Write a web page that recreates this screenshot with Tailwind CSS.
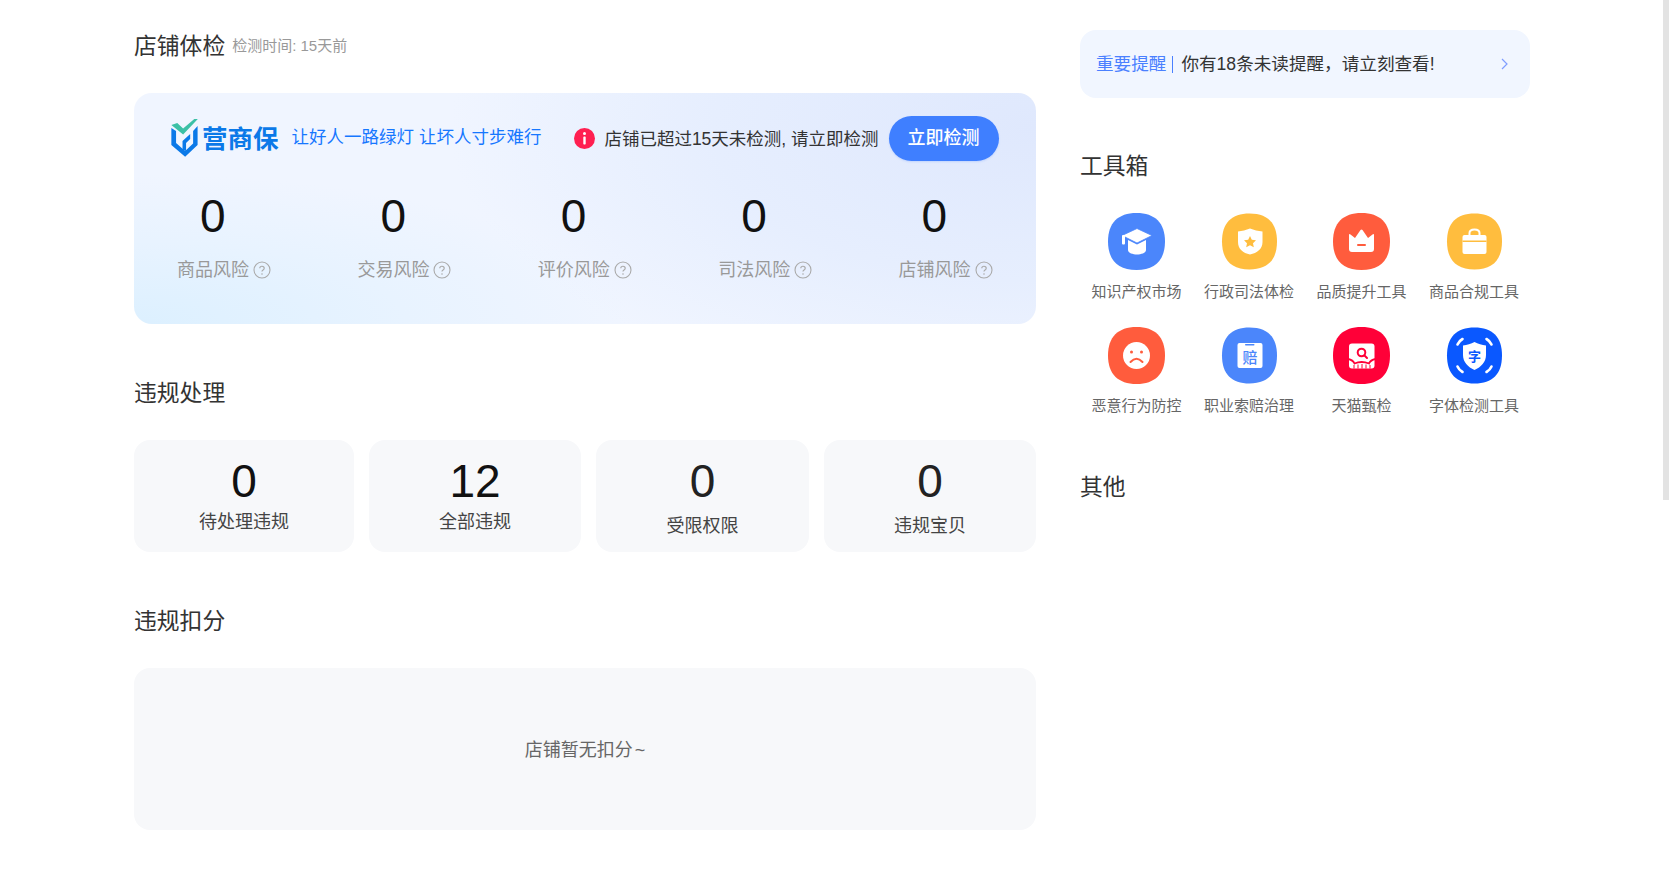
<!DOCTYPE html>
<html lang="zh-CN">
  <head>
    <meta charset="UTF-8" />
    <title>店铺体检</title>
    <script src="https://cdn.jsdelivr.net/npm/@tailwindcss/browser@4"></script>
  </head>
  <body class="relative h-[889px] overflow-hidden bg-white font-['Liberation_Sans','Noto_Sans_CJK_SC',sans-serif] text-[#333]">
    <!-- scrollbar -->
    <div class="absolute right-0 top-0 h-[500px] w-[6px] bg-[#e3e3e3]"></div>

    <div class="flex">
      <!-- left column -->
      <div class="ml-[134px] w-[902px]">
        <div class="flex h-[93px] items-start pt-[30px]">
          <h2 class="text-[22.800px] leading-[32px] text-[#333]">店铺体检</h2>
          <span class="ml-[7px] mt-[6px] text-[15px] leading-[20px] text-[#999]">检测时间: 15天前</span>
        </div>

        <!-- risk card -->
        <div class="h-[231px] rounded-[18px] bg-[radial-gradient(ellipse_55%_65%_at_0%_100%,#dcf0ff_0%,#e8f3ff_55%,transparent_100%),radial-gradient(ellipse_65%_120%_at_100%_15%,#dfe8fd_0%,#e6eefe_55%,transparent_100%),linear-gradient(#f0f5ff,#f0f5ff)]">
          <div class="flex h-[84px] items-center pl-[35px] pt-[7px]">
            <svg width="30" height="40" viewBox="0 0 25.500 40" preserveAspectRatio="none" class="mt-[-2px]">
              <path d="M2 10 L6 13 V25 L13.700 33 L20.500 25.500 V13 L24.300 8 V27 L13.700 38.700 L2 27 Z" fill="#0b79e8" />
              <path d="M11.500 32 V23 L18 16 V21 L14.500 25 V33 Z" fill="#0b79e8" />
              <path d="M2 7 L7 5 L12 10.500 L21.500 1 L24.500 1 L12 16.500 Z" fill="#3cc0a6" />
            </svg>
            <span class="ml-[3px] text-[25.500px] font-bold leading-[32px] text-[#0b79e8]">营商保</span>
            <span class="ml-[13px] mt-[-4px] text-[17.500px] leading-[24px] text-[#1677ff]">让好人一路绿灯 让坏人寸步难行</span>
            <svg width="21" height="21" viewBox="0 0 21 21" class="ml-[33px]">
              <circle cx="10.5" cy="10.5" r="10.5" fill="#ff1f51" />
              <circle cx="10.5" cy="5.6" r="1.5" fill="#fff" />
              <rect x="9.3" y="8.6" width="2.4" height="8" rx="0.8" fill="#fff" />
            </svg>
            <span class="ml-[9px] mt-[1px] text-[17.500px] leading-[24px] text-[#333]">店铺已超过15天未检测, 请立即检测</span>
            <button class="ml-[10px] flex h-[45px] w-[110px] items-center justify-center rounded-full bg-[#3f7fff] text-[18px] font-medium text-white shadow-[0_1px_2px_rgba(63,127,255,0.2)]">立即检测</button>
          </div>

          <div class="grid grid-cols-5 pt-[8px]">
            <div class="w-[181px]">
              <div class="pl-[66px] text-[46px] leading-[62px] text-[#111]">0</div>
              <div class="mt-[10px] flex items-center pl-[43px] text-[18px] leading-[26px] text-[#999]">商品风险
                <svg width="18" height="18" viewBox="0 0 18 18" class="ml-[4px]"><circle cx="9" cy="9" r="8" fill="none" stroke="#aaa" stroke-width="1.1" /><path d="M6.800 7.300 C6.800 4.600 11.200 4.600 11.200 7.200 C11.200 9 9 9 9 10.600" fill="none" stroke="#aaa" stroke-width="1.200" /><circle cx="9" cy="13" r="0.800" fill="#aaa" /></svg>
              </div>
            </div>
            <div class="w-[181px]">
              <div class="pl-[66px] text-[46px] leading-[62px] text-[#111]">0</div>
              <div class="mt-[10px] flex items-center pl-[43px] text-[18px] leading-[26px] text-[#999]">交易风险
                <svg width="18" height="18" viewBox="0 0 18 18" class="ml-[4px]"><circle cx="9" cy="9" r="8" fill="none" stroke="#aaa" stroke-width="1.1" /><path d="M6.800 7.300 C6.800 4.600 11.200 4.600 11.200 7.200 C11.200 9 9 9 9 10.600" fill="none" stroke="#aaa" stroke-width="1.200" /><circle cx="9" cy="13" r="0.800" fill="#aaa" /></svg>
              </div>
            </div>
            <div class="w-[181px]">
              <div class="pl-[66px] text-[46px] leading-[62px] text-[#111]">0</div>
              <div class="mt-[10px] flex items-center pl-[43px] text-[18px] leading-[26px] text-[#999]">评价风险
                <svg width="18" height="18" viewBox="0 0 18 18" class="ml-[4px]"><circle cx="9" cy="9" r="8" fill="none" stroke="#aaa" stroke-width="1.1" /><path d="M6.800 7.300 C6.800 4.600 11.200 4.600 11.200 7.200 C11.200 9 9 9 9 10.600" fill="none" stroke="#aaa" stroke-width="1.200" /><circle cx="9" cy="13" r="0.800" fill="#aaa" /></svg>
              </div>
            </div>
            <div class="w-[181px]">
              <div class="pl-[66px] text-[46px] leading-[62px] text-[#111]">0</div>
              <div class="mt-[10px] flex items-center pl-[43px] text-[18px] leading-[26px] text-[#999]">司法风险
                <svg width="18" height="18" viewBox="0 0 18 18" class="ml-[4px]"><circle cx="9" cy="9" r="8" fill="none" stroke="#aaa" stroke-width="1.1" /><path d="M6.800 7.300 C6.800 4.600 11.200 4.600 11.200 7.200 C11.200 9 9 9 9 10.600" fill="none" stroke="#aaa" stroke-width="1.200" /><circle cx="9" cy="13" r="0.800" fill="#aaa" /></svg>
              </div>
            </div>
            <div class="w-[181px]">
              <div class="pl-[66px] text-[46px] leading-[62px] text-[#111]">0</div>
              <div class="mt-[10px] flex items-center pl-[43px] text-[18px] leading-[26px] text-[#999]">店铺风险
                <svg width="18" height="18" viewBox="0 0 18 18" class="ml-[4px]"><circle cx="9" cy="9" r="8" fill="none" stroke="#aaa" stroke-width="1.1" /><path d="M6.800 7.300 C6.800 4.600 11.200 4.600 11.200 7.200 C11.200 9 9 9 9 10.600" fill="none" stroke="#aaa" stroke-width="1.200" /><circle cx="9" cy="13" r="0.800" fill="#aaa" /></svg>
              </div>
            </div>
          </div>
        </div>

        <!-- violations -->
        <h2 class="mt-[53px] text-[22.800px] leading-[32px]">违规处理</h2>
        <div class="mt-[31px] grid h-[112px] grid-cols-[220px_212px_213px_212px] gap-[15px] text-center">
          <div class="rounded-[16px] bg-[#f7f8fa] pt-[10px]">
            <div class="text-[46px] leading-[62px] text-[#111]">0</div>
            <div class="mt-[-3px] text-[18px] leading-[26px] text-[#444]">待处理违规</div>
          </div>
          <div class="rounded-[16px] bg-[#f7f8fa] pt-[10px]">
            <div class="text-[46px] leading-[62px] text-[#111]">12</div>
            <div class="mt-[-3px] text-[18px] leading-[26px] text-[#444]">全部违规</div>
          </div>
          <div class="rounded-[16px] bg-[#f7f8fa] pt-[10px]">
            <div class="text-[46px] leading-[62px] text-[#222]">0</div>
            <div class="mt-[1px] text-[18px] leading-[26px] text-[#444]">受限权限</div>
          </div>
          <div class="rounded-[16px] bg-[#f7f8fa] pt-[10px]">
            <div class="text-[46px] leading-[62px] text-[#222]">0</div>
            <div class="mt-[1px] text-[18px] leading-[26px] text-[#444]">违规宝贝</div>
          </div>
        </div>

        <h2 class="mt-[53px] text-[22.800px] leading-[32px]">违规扣分</h2>
        <div class="mt-[31px] flex h-[162px] items-center justify-center rounded-[16px] bg-[#f7f8fa] pt-[3px] text-[18px] text-[#666]">店铺暂无扣分<span class="ml-[2px]">~</span></div>
      </div>

      <!-- right column -->
      <div class="ml-[44px] w-[450px] pt-[30px]">
        <div class="flex h-[68px] items-center rounded-[16px] bg-[#f1f6ff] pl-[16px] pr-[22px] text-[17.600px]">
          <span class="text-[#4a80ff]">重要提醒</span>
          <span class="ml-[6px] mr-[8px] h-[17px] w-px bg-[#4a80ff]"></span>
          <span class="text-[#333]">你有18条未读提醒，请立刻查看!</span>
          <svg width="7" height="12" viewBox="0 0 7 12" class="ml-auto"><path d="M1 1 L6 6 L1 11" fill="none" stroke="#7f9dff" stroke-width="1.2" /></svg>
        </div>

        <h2 class="mt-[52px] text-[22.800px] leading-[32px]">工具箱</h2>

        <div class="mt-[31px] grid grid-cols-4 gap-y-[25px] text-center text-[15px] leading-[21px] text-[#666]">
          <div class="flex w-[113px] flex-col items-center gap-[11px]">
            <svg width="57" height="57" viewBox="0 0 57 57">
              <path d="M28.5 0 C47 0 57 10 57 28.5 S47 57 28.5 57 S0 47 0 28.5 S10 0 28.5 0Z" fill="#4b86fb" />
              <path d="M20 27 L29 31.5 L38 27 V37 C38 40 33 41.5 29 41.5 S20 40 20 37Z" fill="#fff" />
              <path d="M29 15.5 L44 22.5 L29 30 L14 22.5 Z" fill="#fff" stroke="#4b86fb" stroke-width="0.8" />
              <rect x="14" y="22" width="3" height="9.5" rx="1" fill="#fff" />
            </svg>
            <span>知识产权市场</span>
          </div>
          <div class="flex w-[113px] flex-col items-center gap-[11px]">
            <svg width="57" height="57" viewBox="0 0 57 57">
              <path d="M28.5 0.500 C46.500 0.500 56 10 56 28.5 S46.500 56.500 28.5 56.500 S1 47 1 28.5 S10.500 0.500 28.5 0.500Z" fill="#ffbd3e" />
              <path d="M29 15.5 C33 17 37 18 41.5 18.500 V29 C41.500 36 36 40 29 41.500 C22 40 17 36 17 29 V18.500 C21 18 25 17 29 15.500Z" fill="#fff" />
              <path d="M29 23 L30.800 26.800 L35 27.300 L32 30.200 L32.800 34.300 L29 32.300 L25.200 34.300 L26 30.200 L23 27.300 L27.200 26.800Z" fill="#ffbd3e" />
            </svg>
            <span>行政司法体检</span>
          </div>
          <div class="flex w-[113px] flex-col items-center gap-[11px]">
            <svg width="57" height="57" viewBox="0 0 57 57">
              <path d="M28.5 0 C47 0 57 10 57 28.5 S47 57 28.5 57 S0 47 0 28.5 S10 0 28.5 0Z" fill="#ff5c3d" />
              <path d="M16 22 Q16 20.500 17.500 21.500 L22 25 L27.500 17 Q28.500 16 29.500 17 L35 25 L39.500 21.500 Q41 20.500 41 22 V36 Q41 39 38 39 H19 Q16 39 16 36 Z" fill="#fff" />
              <rect x="24" y="31" width="9" height="2" rx="1" fill="#ff5c3d" />
            </svg>
            <span>品质提升工具</span>
          </div>
          <div class="flex w-[113px] flex-col items-center gap-[11px]">
            <svg width="57" height="57" viewBox="0 0 57 57">
              <path d="M28.5 0.500 C46.500 0.500 56 10 56 28.5 S46.500 56.500 28.5 56.500 S1 47 1 28.5 S10.500 0.500 28.5 0.500Z" fill="#ffbd3e" />
              <path d="M23.500 22 V20 Q23.500 16.500 28.500 16.500 Q33.500 16.500 33.500 20 V22" fill="none" stroke="#fff" stroke-width="2" />
              <rect x="16.500" y="22" width="24" height="19" rx="2" fill="#fff" />
              <rect x="16.500" y="27.500" width="24" height="1.500" fill="#ffbd3e" />
            </svg>
            <span>商品合规工具</span>
          </div>

          <div class="flex w-[113px] flex-col items-center gap-[11px]">
            <svg width="57" height="57" viewBox="0 0 57 57">
              <path d="M28.5 0 C47 0 57 10 57 28.5 S47 57 28.5 57 S0 47 0 28.5 S10 0 28.5 0Z" fill="#ff5c3d" />
              <circle cx="28.500" cy="28.500" r="13.500" fill="#fff" />
              <circle cx="23.500" cy="25" r="1.500" fill="#ff5c3d" />
              <circle cx="33.500" cy="25" r="1.500" fill="#ff5c3d" />
              <path d="M22.500 35 Q28.500 28.500 34.500 35" fill="none" stroke="#ff5c3d" stroke-width="2" stroke-linecap="round" />
            </svg>
            <span>恶意行为防控</span>
          </div>
          <div class="flex w-[113px] flex-col items-center gap-[11px]">
            <svg width="57" height="57" viewBox="0 0 57 57">
              <path d="M28.5 0.500 C46.500 0.500 56 10 56 28.5 S46.500 56.500 28.5 56.500 S1 47 1 28.5 S10.500 0.500 28.5 0.500Z" fill="#4b86fb" />
              <rect x="16.500" y="16" width="25" height="25" rx="2" fill="#fff" />
              <rect x="24" y="17" width="9.500" height="1.500" rx="0.700" fill="#4b86fb" />
              <text x="29" y="35.500" text-anchor="middle" font-size="15" font-weight="500" fill="#4b86fb">赔</text>
            </svg>
            <span>职业索赔治理</span>
          </div>
          <div class="flex w-[113px] flex-col items-center gap-[11px]">
            <svg width="57" height="57" viewBox="0 0 57 57">
              <path d="M28.5 0 C47 0 57 10 57 28.5 S47 57 28.5 57 S0 47 0 28.5 S10 0 28.5 0Z" fill="#ff0038" />
              <rect x="16" y="16.500" width="25.500" height="25" rx="3" fill="#fff" />
              <circle cx="28.500" cy="25.500" r="3.800" fill="none" stroke="#ff0038" stroke-width="2" />
              <path d="M31.500 28.500 L34 31" stroke="#ff0038" stroke-width="2" stroke-linecap="round" />
              <path d="M15 32 Q20 33 21.500 36.500 Q28.500 33.500 36 36.500 Q37.500 33 42.500 32" fill="none" stroke="#ff0038" stroke-width="1.800" />
              <path d="M21 38 V41.500 M25 37.500 V41.500 M29 37 V41.500 M33 37.500 V41.500 M37 38 V41.500" stroke="#ff0038" stroke-width="1" />
            </svg>
            <span>天猫甄检</span>
          </div>
          <div class="flex w-[113px] flex-col items-center gap-[11px]">
            <svg width="57" height="57" viewBox="0 0 57 57">
              <path d="M28.5 0.500 C46.500 0.500 56 10 56 28.5 S46.500 56.500 28.5 56.500 S1 47 1 28.5 S10.500 0.500 28.5 0.500Z" fill="#0a58ff" />
              <path d="M28.500 15 C32 17 36 18 40 18.500 V28 C40 35 35 40 28.500 43 C22 40 17 35 17 28 V18.500 C21 18 25 17 28.500 15Z" fill="#fff" />
              <text x="28.500" y="33.500" text-anchor="middle" font-size="13" font-weight="700" fill="#0a58ff">字</text>
              <path d="M11.500 17.500 Q13 14 16.500 12 M45.500 17.500 Q44 14 40.500 12 M11.500 39.500 Q13 43 16.500 45 M45.500 39.500 Q44 43 40.500 45" fill="none" stroke="#fff" stroke-width="2.600" stroke-linecap="round" />
            </svg>
            <span>字体检测工具</span>
          </div>
        </div>

        <h2 class="mt-[55px] text-[22.800px] leading-[32px]">其他</h2>
      </div>
    </div>
  </body>
</html>
